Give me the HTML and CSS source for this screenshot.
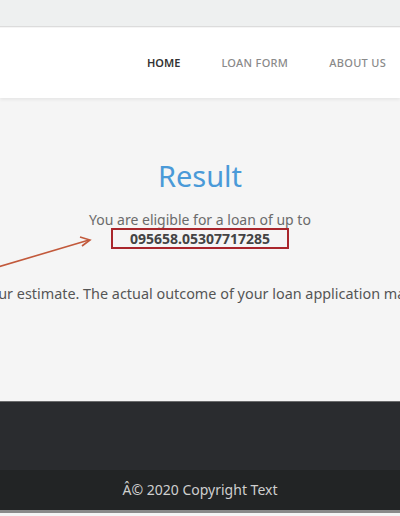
FILE: index.html
```
<!DOCTYPE html>
<html>
<head>
<meta charset="utf-8">
<link rel="stylesheet" href="styles.css">
</head>
<body>
<div class="topbar"></div>
<header class="header">
  <nav class="nav">
    <a class="nav-link active">HOME</a>
    <a class="nav-link">LOAN FORM</a>
    <a class="nav-link">ABOUT US</a>
  </nav>
</header>
<main class="main">
  <h1 class="title">Result</h1>
  <p class="eligible">You are eligible for a loan of up to</p>
  <div class="amount-row"><span class="amount">095658.05307717285</span></div>
  <div class="note-row"><p class="note">This is your estimate. The actual outcome of your loan application may differ.</p></div>
  <svg class="arrow" width="100" height="40" viewBox="0 0 100 40">
    <line x1="-2" y1="38" x2="89" y2="11" stroke="#c2593b" stroke-width="1.6"/>
    <polyline points="80,8 90,11 82,17" fill="none" stroke="#c2593b" stroke-width="1.6"/>
  </svg>
</main>
<footer class="footer">
  <div class="footer-top"></div>
  <div class="footer-bottom">Â© 2020 Copyright Text</div>
</footer>
</body>
</html>
```
FILE: styles.css
```
html, body {
  margin: 0;
  padding: 0;
}
body {
  width: 400px;
  height: 516px;
  overflow: hidden;
  background: #f5f5f5;
  font-family: "Noto Sans", "DejaVu Sans", sans-serif;
}
.topbar {
  height: 26px;
  background: #eef0f0;
  border-bottom: 1px solid #dcdcdc;
}
.header {
  margin-top: 1px;
  height: 70px;
  background: #ffffff;
  box-shadow: 0 2px 3px rgba(0,0,0,0.06);
  display: flex;
  align-items: center;
  justify-content: flex-end;
  position: relative;
}
.nav {
  display: flex;
  gap: 41px;
  padding-right: 14px;
  padding-bottom: 1px;
}
.nav-link {
  font-size: 11px;
  font-weight: 500;
  color: #8a8a8a;
  letter-spacing: 0.3px;
}
.nav-link.active {
  color: #333;
  font-weight: 600;
  letter-spacing: 0;
}
.main {
  position: relative;
  height: 303px;
  padding-top: 1px;
  box-sizing: border-box;
  display: flex;
  flex-direction: column;
  align-items: center;
}
.title {
  margin: 60px 0 0;
  font-size: 29px;
  font-weight: 400;
  color: #4a9ad8;
  line-height: 34px;
}
.eligible {
  margin: 18px 0 0;
  font-size: 14px;
  color: #6b6b6b;
  line-height: 18px;
}
.amount-row {
  display: flex;
  justify-content: center;
  margin-top: -1px;
}
.amount {
  display: inline-block;
  border: 2px solid #a9262c;
  padding: 0 17px;
  font-size: 14px;
  font-weight: 700;
  color: #444;
  line-height: 17px;
}
.note-row {
  width: 400px;
  display: flex;
  justify-content: center;
  margin-top: 36px;
}
.note {
  margin: 0;
  white-space: nowrap;
  flex: none;
  font-size: 14.4px;
  color: #555;
  line-height: 18px;
  padding-right: 9px;
}
.arrow {
  position: absolute;
  left: 0;
  top: 131px;
}
.footer {
  border-top: 1px solid #6a6b6c;
}
.footer-top {
  height: 68px;
  background: #2a2c2f;
}
.footer-bottom {
  height: 43px;
  background: #222425;
  color: #cfcfcf;
  font-size: 14px;
  display: flex;
  align-items: center;
  justify-content: center;
  border-bottom: 3px solid #8a8a8a;
  padding-bottom: 2px;
  box-sizing: border-box;
}
```
